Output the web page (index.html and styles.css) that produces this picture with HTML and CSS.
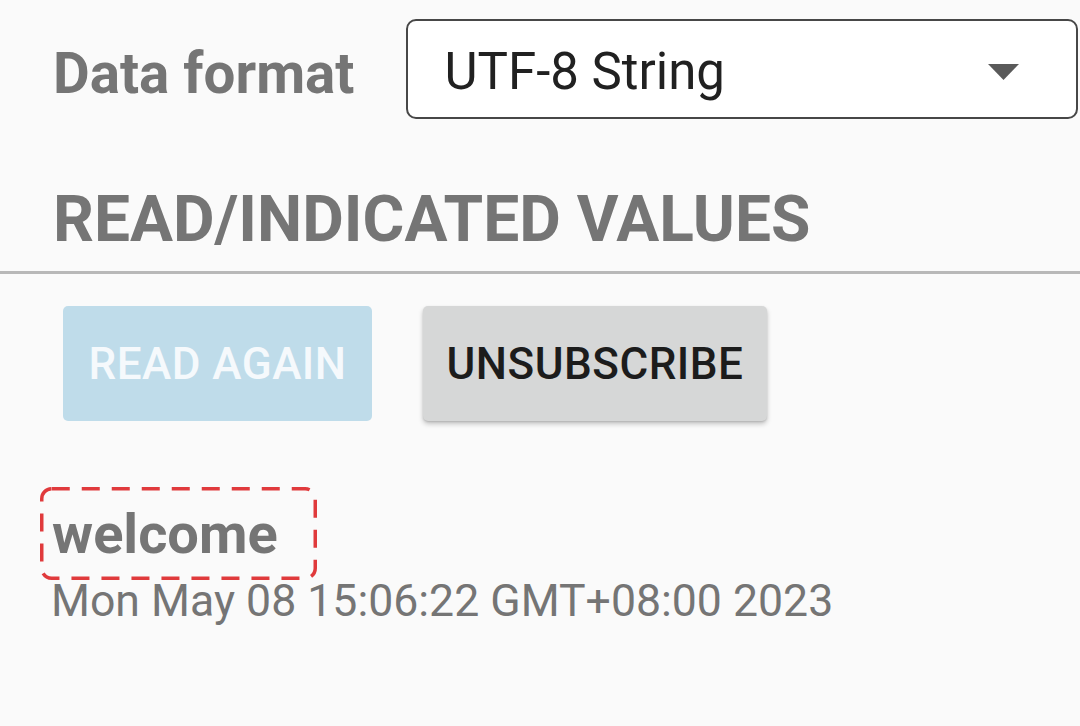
FILE: index.html
```html
<!DOCTYPE html>
<html lang="en">
<head>
<meta charset="utf-8">
<title>Characteristic</title>
<link rel="stylesheet" href="styles.css">
</head>
<body>
<main class="page">
  <div class="format-row">
    <span class="format-label">Data format</span>
    <div class="select">
      <span class="select-value">UTF-8 String</span>
      <svg class="select-arrow" width="31" height="16" viewBox="0 0 31 16"><path d="M0 0H31L15.5 16Z" fill="#5a5a5a"/></svg>
    </div>
  </div>

  <h2 class="section-title">READ/INDICATED VALUES</h2>

  <div class="actions">
    <button class="btn btn-disabled" type="button">READ AGAIN</button>
    <button class="btn btn-raised" type="button">UNSUBSCRIBE</button>
  </div>

  <div class="value">
    <div class="value-box">
      <span class="value-text">welcome</span>
      <svg class="value-outline" width="277" height="93" viewBox="0 0 277 93"><rect x="1.75" y="1.75" width="273.5" height="89.5" rx="10" ry="10" fill="none" stroke="#e03a3c" stroke-width="3.5" stroke-dasharray="18 12"/></svg>
    </div>
    <div class="value-time">Mon May 08 15:06:22 GMT+08:00 2023</div>
  </div>
</main>
</body>
</html>
```

FILE: styles.css
```css
html, body {
  margin: 0;
  padding: 0;
  background: #fafafa;
}

body {
  font-family: Roboto, "Liberation Sans", sans-serif;
  color: #757575;
  width: 1080px;
  height: 726px;
  overflow: hidden;
}

.page {
  display: flex;
  flex-direction: column;
}

.format-row {
  display: flex;
  align-items: center;
  padding: 19px 2px 0 53px;
}

.format-label {
  font-size: 56.5px;
  font-weight: 700;
  color: #757575;
  white-space: nowrap;
  padding-top: 9px;
}

.select {
  margin-left: 52px;
  flex: 1;
  height: 100px;
  box-sizing: border-box;
  border: 2.5px solid #474747;
  border-radius: 10px;
  background: #ffffff;
  display: flex;
  align-items: center;
  justify-content: space-between;
  padding: 4px 57px 0 36px;
}

.select-value {
  font-size: 51px;
  color: #212121;
}

.select-value + .select-arrow {
  display: block;
  margin-top: 2px;
}

.section-title {
  margin: 63px 0 0;
  padding: 0 0 14px 53px;
  font-size: 64px;
  font-weight: 700;
  line-height: 75px;
  color: #757575;
  border-bottom: 3px solid #b8b8b8;
}

.actions {
  display: flex;
  gap: 51px;
  padding: 32px 0 0 63px;
}

.btn {
  height: 115px;
  border: none;
  border-radius: 5px;
  font-family: Roboto, "Liberation Sans", sans-serif;
  font-size: 44px;
  font-weight: 500;
  letter-spacing: 0.5px;
  padding: 0;
  white-space: nowrap;
  display: flex;
  align-items: center;
  justify-content: center;
}

.btn-disabled {
  width: 309px;
  background: #bfdcea;
  color: #f5f9fc;
}

.btn-raised {
  width: 344px;
  background: #d6d7d7;
  color: #1c1c1c;
  box-shadow: 0 3px 5px rgba(0, 0, 0, 0.22), 0 1px 2px rgba(0, 0, 0, 0.12);
}

.value {
  padding: 66px 0 0 40px;
}

.value-box {
  position: relative;
  width: 277px;
  height: 93px;
  box-sizing: border-box;
  padding: 14px 0 0 12px;
}

.value-text {
  display: block;
  font-size: 56px;
  font-weight: 700;
  line-height: 66px;
  color: #757575;
}

.value-outline {
  position: absolute;
  left: 0;
  top: 0;
}

.value-time {
  margin: -5px 0 0 11px;
  font-size: 44.6px;
  color: #757575;
  white-space: nowrap;
}
```
